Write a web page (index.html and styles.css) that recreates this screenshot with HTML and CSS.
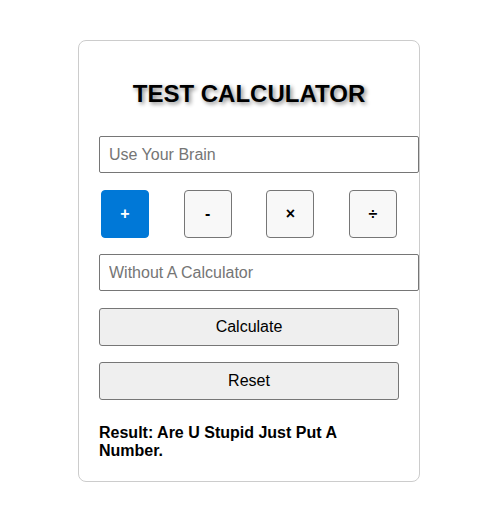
FILE: index.html
```
<!DOCTYPE html>
<html>
<head>
<meta charset="utf-8">
<link rel="stylesheet" href="styles.css">
</head>
<body>
<div class="card">
  <h2 class="title">TEST CALCULATOR</h2>
  <input class="field" type="text" placeholder="Use Your Brain">
  <div class="ops">
    <button class="op active">+</button>
    <button class="op">-</button>
    <button class="op">×</button>
    <button class="op">÷</button>
  </div>
  <input class="field" type="text" placeholder="Without A Calculator">
  <button class="action calc">Calculate</button>
  <button class="action reset">Reset</button>
  <p class="result">Result: Are U Stupid Just Put A Number.</p>
</div>
</body>
</html>
```
FILE: styles.css
```
body {
  margin: 0;
  background: #ffffff;
  font-family: "Liberation Sans", Arial, sans-serif;
}
.card {
  width: 300px;
  margin: 40px 0 0 78px;
  padding: 20px;
  border: 1px solid #cccccc;
  border-radius: 8px;
  display: flex;
  flex-direction: column;
  align-items: flex-start;
}
.title {
  margin: 19px 0 20px 0;
  width: 100%;
  text-align: center;
  font-size: 24px;
  line-height: 28px;
  font-weight: bold;
  color: #000;
  text-shadow: 2px 2px 4px #888888;
}
.field {
  box-sizing: border-box;
  width: 320px;
  height: 37px;
  margin: 8px 0 0 0;
  padding: 0 9px;
  border: 1px solid #767676;
  border-radius: 2px;
  font-family: "Liberation Sans", Arial, sans-serif;
  font-size: 16px;
  color: #000;
  background: #fff;
}
.field::placeholder {
  color: #757575;
}
.ops {
  width: 100%;
  display: flex;
  justify-content: space-between;
  margin: 15px 0 6px 0;
}
.op {
  box-sizing: border-box;
  width: 48px;
  height: 48px;
  margin: 2px;
  border: 1px solid #767676;
  border-radius: 4px;
  background: #f8f8f8;
  font-family: "Liberation Sans", Arial, sans-serif;
  font-size: 16px;
  font-weight: bold;
  color: #000;
  padding: 0;
}
.op.active {
  background: #0078d7;
  border-color: #0078d7;
  color: #fff;
}
.action {
  box-sizing: border-box;
  width: 300px;
  height: 38px;
  border: 1px solid #767676;
  border-radius: 3px;
  background: #efefef;
  font-family: "Liberation Sans", Arial, sans-serif;
  font-size: 16px;
  color: #000;
}
.calc {
  margin: 17px 0 0 0;
}
.reset {
  margin: 16px 0 0 0;
}
.result {
  margin: 24px 0 1px 0;
  font-size: 16px;
  line-height: 18px;
  font-weight: bold;
  color: #000;
}
```
